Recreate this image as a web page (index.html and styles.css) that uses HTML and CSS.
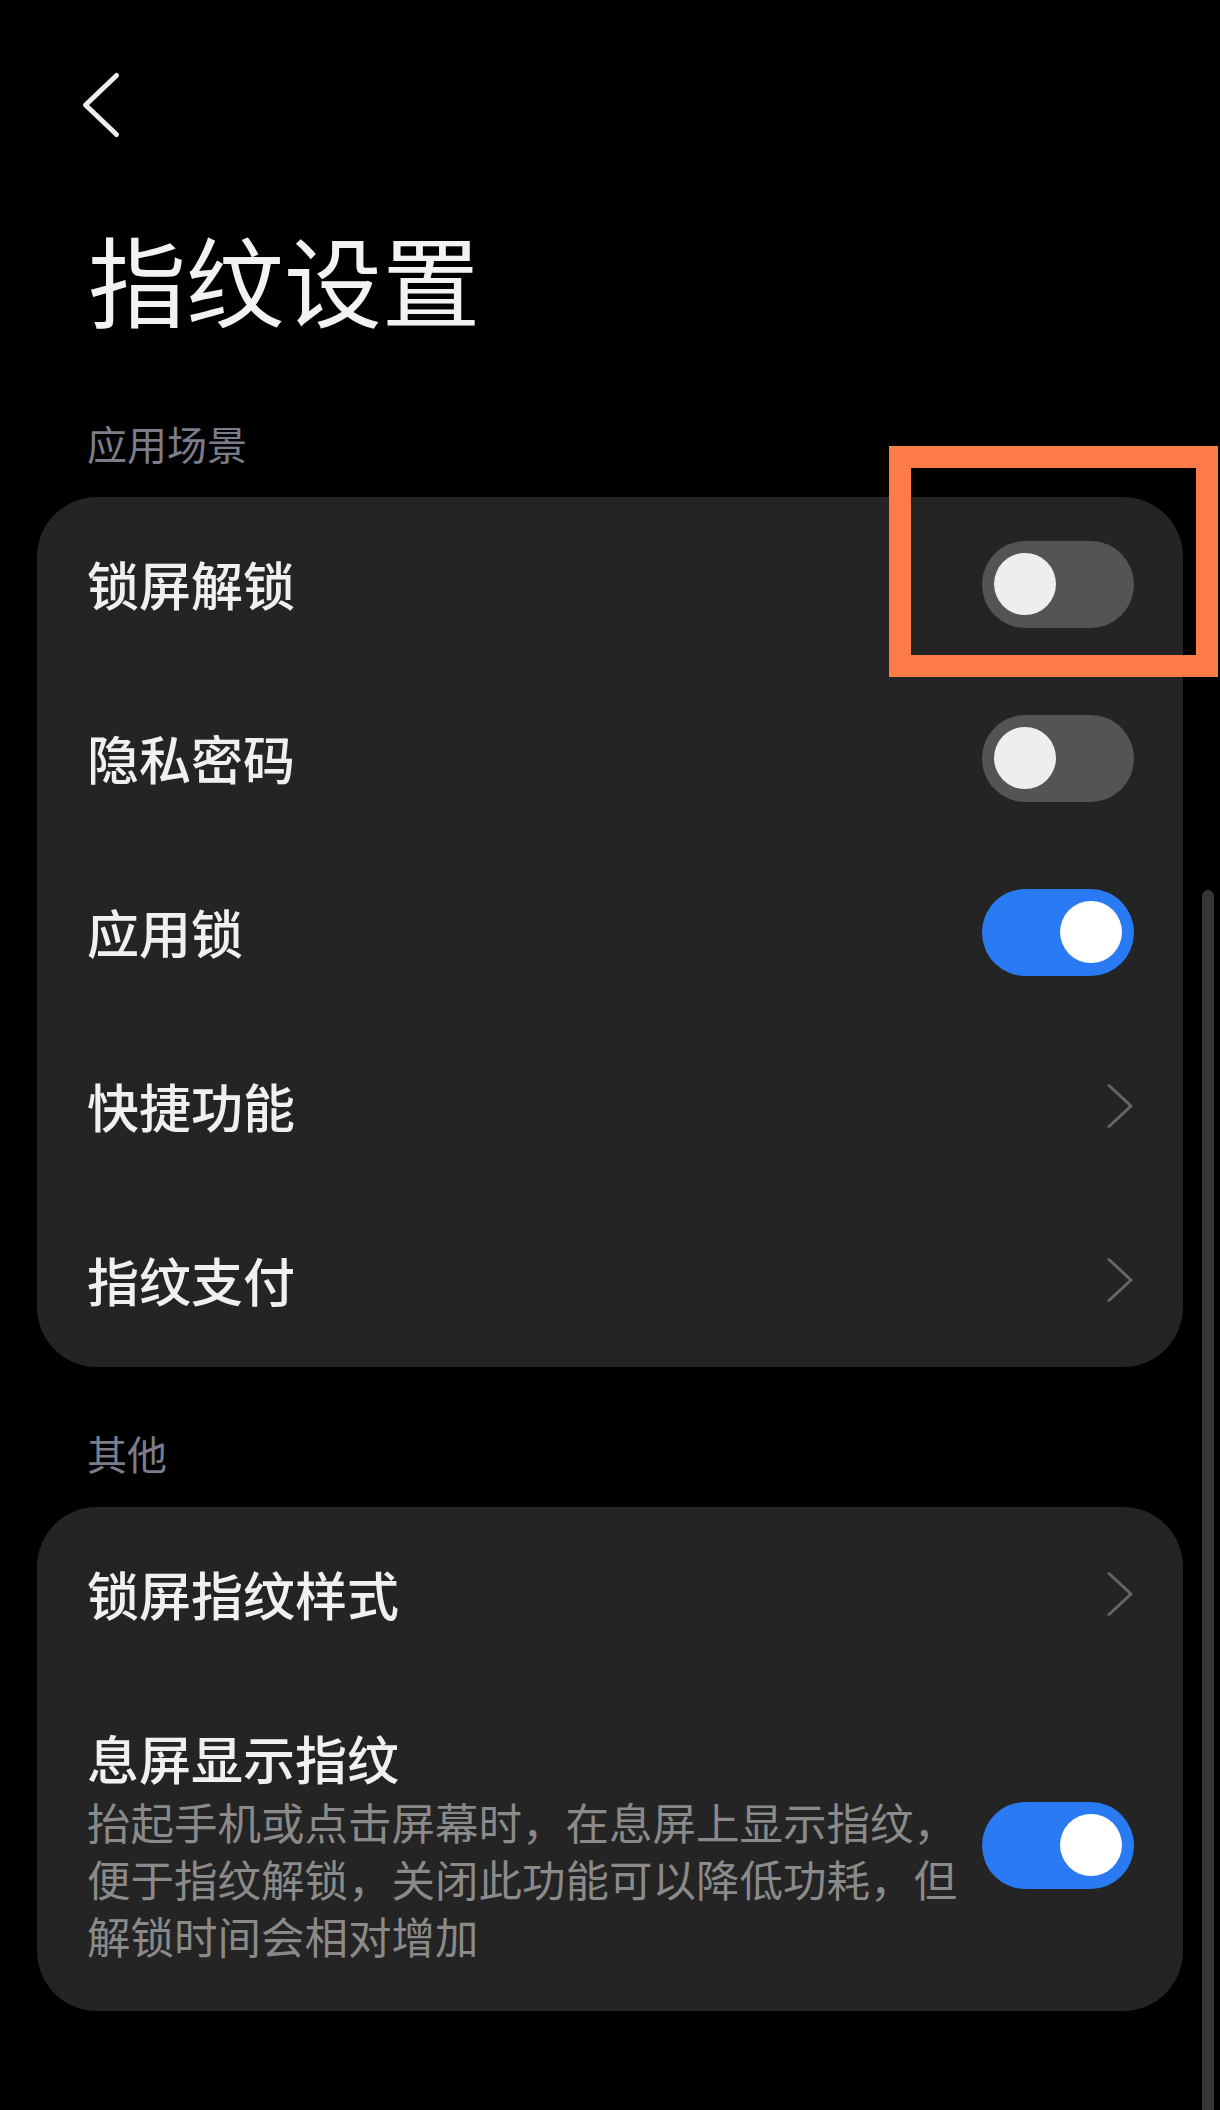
FILE: index.html
```html
<!DOCTYPE html>
<html lang="zh-CN">

<head>
    <meta charset="utf-8" />
    <title>指纹设置</title>
    <meta name="viewport" content="width=device-width, initial-scale=1">
    <link rel="stylesheet" href="styles.css">
</head>

<body>
    <div class="page">
        <div class="topbar">
            <svg class="back" width="42" height="72" viewBox="0 0 42 72">
                <path d="M36.5 5.5 L5.5 35 L36.5 64.5" />
            </svg>
        </div>
        <h1 class="title">指纹设置</h1>

        <div class="section-label">应用场景</div>
        <div class="card">
            <div class="row">
                <span class="row-title">锁屏解锁</span>
                <span class="switch"></span>
            </div>
            <div class="row">
                <span class="row-title">隐私密码</span>
                <span class="switch"></span>
            </div>
            <div class="row">
                <span class="row-title">应用锁</span>
                <span class="switch on"></span>
            </div>
            <div class="row">
                <span class="row-title">快捷功能</span>
                <svg class="arrow" width="28" height="46" viewBox="0 0 28 46">
                    <path d="M3 2.5 L25 23 L3 43.5" />
                </svg>
            </div>
            <div class="row">
                <span class="row-title">指纹支付</span>
                <svg class="arrow" width="28" height="46" viewBox="0 0 28 46">
                    <path d="M3 2.5 L25 23 L3 43.5" />
                </svg>
            </div>
        </div>

        <div class="section-label">其他</div>
        <div class="card">
            <div class="row">
                <span class="row-title">锁屏指纹样式</span>
                <svg class="arrow" width="28" height="46" viewBox="0 0 28 46">
                    <path d="M3 2.5 L25 23 L3 43.5" />
                </svg>
            </div>
            <div class="row tall">
                <div class="row-text">
                    <div class="row-title">息屏显示指纹</div>
                    <div class="row-desc">抬起手机或点击屏幕时，在息屏上显示指纹，便于指纹解锁，关闭此功能可以降低功耗，但解锁时间会相对增加</div>
                </div>
                <span class="switch on"></span>
            </div>
        </div>
    </div>

    <div class="scrollbar"></div>
    <div class="highlight"></div>
</body>

</html>
```

FILE: styles.css
```css
html, body {
    margin: 0;
    background-color: #000;
}

body {
    font-family: "Noto Sans CJK SC", "Noto Sans", sans-serif;
    color: #f0f0f0;
    overflow: hidden;
}

.page {
    padding: 0 37px;
}

.topbar {
    height: 142px;
    padding-left: 43px;
    box-sizing: border-box;
    padding-top: 70px;
}

.back {
    display: block;
}

.back path {
    fill: none;
    stroke: #eeeeee;
    stroke-width: 5;
    stroke-linecap: round;
    stroke-linejoin: round;
}

.title {
    margin: 76px 0 0;
    padding-left: 51px;
    font-size: 98px;
    line-height: 118px;
    font-weight: 400;
    color: #f2f2f2;
}

.section-label {
    padding-left: 50px;
    font-size: 40px;
    line-height: 56px;
    color: #7b7d8b;
    margin: 79px 0 26px;
}

.card + .section-label {
    margin-top: 58px;
}

.card {
    background-color: #242424;
    border-radius: 60px;
}

.row {
    height: 174px;
    display: flex;
    align-items: center;
    justify-content: space-between;
    padding: 0 49px 0 50px;
}

.row.tall {
    height: auto;
    padding-top: 45px;
    padding-bottom: 47px;
    gap: 10px;
}

.row-title {
    font-size: 52px;
    line-height: 64px;
    font-weight: 500;
    color: #f0f0f0;
}

.row-text {
    flex: 1;
}

.row-desc {
    margin-top: 3px;
    font-size: 43.5px;
    line-height: 57px;
    color: #8a8a8a;
}

.switch {
    flex-shrink: 0;
    width: 152px;
    height: 87px;
    box-sizing: border-box;
    padding: 0 12px;
    border-radius: 44px;
    background-color: #545454;
    display: flex;
    align-items: center;
}

.switch::after {
    content: "";
    width: 62px;
    height: 62px;
    border-radius: 50%;
    background-color: #eeeeee;
}

.switch.on {
    background-color: #2a7bf3;
    justify-content: flex-end;
}

.switch.on::after {
    background-color: #ffffff;
}

.arrow {
    flex-shrink: 0;
}

.arrow path {
    fill: none;
    stroke: #666666;
    stroke-width: 3;
    stroke-linecap: round;
    stroke-linejoin: round;
}

.scrollbar {
    position: absolute;
    left: 1202px;
    top: 890px;
    width: 12px;
    height: 1220px;
    border-radius: 6px 6px 0 0;
    background-color: #363636;
}

.highlight {
    position: absolute;
    left: 889px;
    top: 446px;
    width: 329px;
    height: 231px;
    box-sizing: border-box;
    border: 22px solid #fd7b46;
}
```
